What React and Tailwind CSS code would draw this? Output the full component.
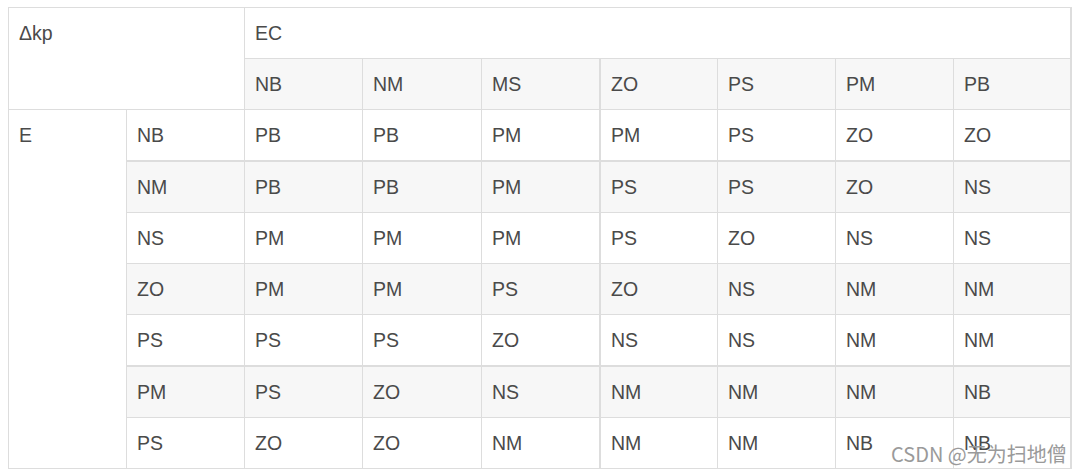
import React from "react";

const header2 = ["NB", "NM", "MS", "ZO", "PS", "PM", "PB"];
const rows = [
  ["NB", "PB", "PB", "PM", "PM", "PS", "ZO", "ZO"],
  ["NM", "PB", "PB", "PM", "PS", "PS", "ZO", "NS"],
  ["NS", "PM", "PM", "PM", "PS", "ZO", "NS", "NS"],
  ["ZO", "PM", "PM", "PS", "ZO", "NS", "NM", "NM"],
  ["PS", "PS", "PS", "ZO", "NS", "NS", "NM", "NM"],
  ["PM", "PS", "ZO", "NS", "NM", "NM", "NM", "NB"],
  ["PS", "ZO", "ZO", "NM", "NM", "NM", "NB", "NB"],
];

function Cell({ children, shaded, thickLeft, thickTop }) {
  return (
    <div
      className={
        "px-[10px] py-[10px] leading-[30px] whitespace-nowrap border-[#dddddd] " +
        (shaded ? "bg-[#f7f7f7] " : "bg-white ") +
        (thickLeft ? "border-l " : "") +
        (thickTop ? "border-t leading-[29px] " : "")
      }
    >
      {children}
    </div>
  );
}

export default function App() {
  return (
    <div className="bg-white w-[1077px] h-[475px] pl-[8px] pt-[7px] relative font-['Liberation_Sans',Arial,sans-serif] text-[19.5px] text-[#4a4a4a]">
      <div className="grid w-[1064px] gap-px bg-[#dddddd] pt-px pl-px pb-px pr-[2px] grid-cols-[117px_117px_117px_118px_117px_117px_117px_117px_116px] grid-rows-[50px_50px_50px_51px_50px_50px_50px_51px_50px]">
        <div className="col-span-2 row-span-2 bg-white px-[10px] py-[10px] leading-[30px]">Δkp</div>
        <div className="col-span-7 bg-white px-[10px] py-[10px] leading-[30px]">EC</div>
        {header2.map((h, i) => (
          <Cell key={"h" + i} shaded thickLeft={i === 3}>
            {h}
          </Cell>
        ))}
        <div className="row-span-7 bg-white px-[10px] py-[10px] leading-[30px]">E</div>
        {rows.map((r, ri) =>
          r.map((c, ci) => (
            <Cell
              key={ri + "-" + ci}
              shaded={ri % 2 === 1}
              thickLeft={ci === 4}
              thickTop={ri === 1 || ri === 5}
            >
              {c}
            </Cell>
          ))
        )}
      </div>
      <div className="absolute left-[891px] top-[444px] leading-none text-[20px] text-[#9a9a9a] font-['Noto_Sans_CJK_SC',sans-serif] whitespace-nowrap">
        CSDN @无为扫地僧
      </div>
    </div>
  );
}
